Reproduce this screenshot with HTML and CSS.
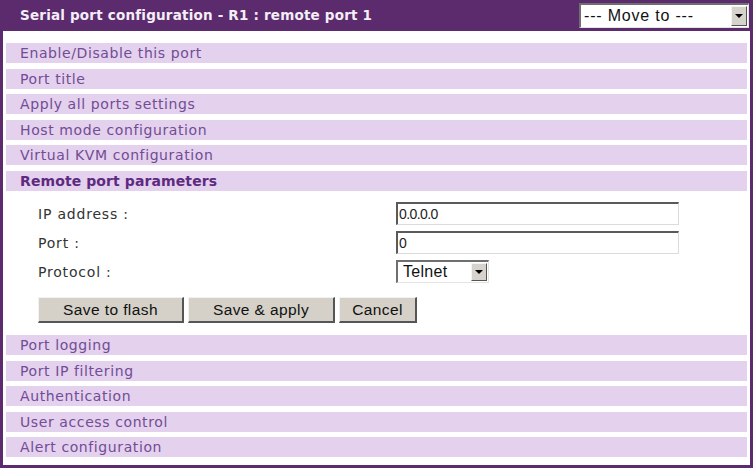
FILE: index.html
```html
<!DOCTYPE html>
<html>
<head>
<meta charset="utf-8">
<link rel="stylesheet" href="styles.css">
</head>
<body>
<div class="panel">
  <div class="header">
    <span class="title">Serial port configuration - R1 : remote port 1</span>
    <div class="dropdown move">
      <span class="dd-text">--- Move to ---</span>
      <span class="dd-btn"><span class="tri"></span></span>
    </div>
  </div>
  <div class="content">
    <div class="row">Enable/Disable this port</div>
    <div class="row">Port title</div>
    <div class="row">Apply all ports settings</div>
    <div class="row">Host mode configuration</div>
    <div class="row">Virtual KVM configuration</div>
    <div class="row active">Remote port parameters</div>
    <div class="form">
      <div class="field">
        <span class="label">IP address :</span>
        <div class="input">0.0.0.0</div>
      </div>
      <div class="field">
        <span class="label">Port :</span>
        <div class="input">0</div>
      </div>
      <div class="field">
        <span class="label">Protocol :</span>
        <div class="dropdown proto">
          <span class="dd-text">Telnet</span>
          <span class="dd-btn"><span class="tri"></span></span>
        </div>
      </div>
      <div class="buttons">
        <div class="btn b1">Save to flash</div>
        <div class="btn b2">Save &amp; apply</div>
        <div class="btn b3">Cancel</div>
      </div>
    </div>
    <div class="row">Port logging</div>
    <div class="row">Port IP filtering</div>
    <div class="row">Authentication</div>
    <div class="row">User access control</div>
    <div class="row">Alert configuration</div>
  </div>
</div>
</body>
</html>
```
FILE: styles.css
```css
html, body {
  margin: 0;
  padding: 0;
  background: #ffffff;
}
body {
  font-family: "DejaVu Sans", Verdana, sans-serif;
}
.panel {
  width: 753px;
  height: 468px;
  box-sizing: border-box;
  border: 3px solid #5b2b6e;
  border-top: 0;
  background: #fff;
}
.header {
  height: 31px;
  background: #5b2b6e;
  display: flex;
  justify-content: space-between;
  align-items: flex-start;
  margin: 0 -3px;
  padding-left: 20px;
  padding-right: 4px;
}
.title {
  color: #f4eef6;
  font-weight: bold;
  font-size: 13.5px;
  line-height: 31px;
  letter-spacing: 0.2px;
}
.dropdown {
  box-sizing: border-box;
  background: #fff;
  display: flex;
  align-items: stretch;
  border-top: 2px solid #6f6f6f;
  border-left: 2px solid #6f6f6f;
  border-bottom: 1px solid #e4e4e4;
  border-right: 1px solid #e4e4e4;
  font-family: "Liberation Sans", Arial, sans-serif;
  font-size: 16px;
  color: #111;
}
.move {
  width: 170px;
  height: 25px;
  margin-top: 3px;
}
.dd-text {
  flex: 1;
  padding-left: 3px;
  line-height: 21px;
  letter-spacing: 0.8px;
}
.dd-btn {
  width: 16px;
  box-sizing: border-box;
  margin: 1px;
  background: #d6d3cc;
  border-top: 1px solid #f4f4f4;
  border-left: 1px solid #f4f4f4;
  border-right: 1px solid #555;
  border-bottom: 1px solid #555;
  display: flex;
  align-items: center;
  justify-content: center;
}
.tri {
  width: 0;
  height: 0;
  border-left: 4px solid transparent;
  border-right: 4px solid transparent;
  border-top: 4px solid #000;
}
.content {
  padding: 12px 3px 0 3px;
}
.row {
  height: 20px;
  margin-bottom: 5.5px;
  background: #e3d1ed;
  color: #724c95;
  font-size: 14px;
  letter-spacing: 0.6px;
  line-height: 20px;
  padding-left: 14px;
}
.row.active {
  font-weight: bold;
  color: #5e2a80;
  letter-spacing: 0.1px;
  margin-bottom: 0;
}
.form {
  padding: 11.5px 0 12px 32px;
}
.field {
  display: flex;
  align-items: center;
  height: 23px;
  margin-bottom: 6px;
}
.label {
  width: 358px;
  font-size: 14px;
  letter-spacing: 0.8px;
  color: #333;
}
.input {
  box-sizing: border-box;
  width: 283px;
  height: 23px;
  border-top: 2px solid #5a5a5a;
  border-left: 2px solid #5a5a5a;
  border-bottom: 1px solid #dcdcdc;
  border-right: 1px solid #dcdcdc;
  font-family: "Liberation Sans", Arial, sans-serif;
  font-size: 14px;
  letter-spacing: -0.6px;
  line-height: 20px;
  padding-left: 1px;
  color: #222;
}
.proto {
  width: 93px;
  height: 23px;
}
.proto .dd-text {
  line-height: 20px;
  padding-left: 5px;
  letter-spacing: 0.3px;
}
.buttons {
  display: flex;
  gap: 4px;
  margin-top: 14px;
}
.btn {
  box-sizing: border-box;
  height: 26px;
  background: #d5d1c9;
  border-top: 1px solid #f2f2f2;
  border-left: 1px solid #f2f2f2;
  border-right: 2px solid #555;
  border-bottom: 2px solid #555;
  font-family: "Liberation Sans", Arial, sans-serif;
  font-size: 15.5px;
  color: #111;
  text-align: center;
  line-height: 23px;
  letter-spacing: 0.4px;
}
.b1 { width: 146px; }
.b2 { width: 147px; }
.b3 { width: 78px; }
```
